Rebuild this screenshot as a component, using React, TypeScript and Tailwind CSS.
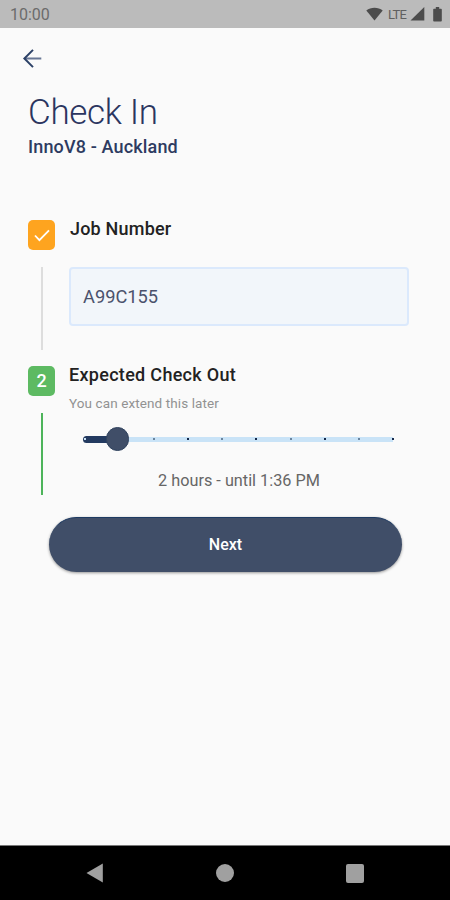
import type { ReactNode } from 'react';

const ticks = [0, 1, 2, 3, 4, 5, 6, 7, 8, 9];

function StatusBar() {
  return (
    <header className="flex h-7 items-center justify-between bg-[#bbbbbb] pl-[10px] pr-[8px] text-[#6b6b6b]">
      <span className="pt-[2px] text-[16px] leading-none">10:00</span>
      <div className="flex items-center">
        <svg width="17" height="14" viewBox="0 0 17 14" fill="#4c4c4c">
          <path d="M.3 3.600C2.600 1.800 5.400.8 8.500.8s5.900 1 8.200 2.800L8.500 13.600z" />
        </svg>
        <span className="ml-[5px] w-[21px] text-[13px] leading-none tracking-[-0.7px] text-[#606060]">LTE</span>
        <svg className="ml-[1px]" width="15" height="14" viewBox="0 0 15 14" fill="#4c4c4c">
          <path d="M14.300 0v13.600H.5z" />
        </svg>
        <svg className="ml-[8px]" width="9" height="15" viewBox="0 0 9 15" fill="#4c4c4c">
          <path d="M2.800 0h3.400v1.700H8q.8 0 .8.8v11.200q0 .8-.8.8H1q-.8 0-.8-.8V2.500q0-.8.8-.8h1.800z" />
        </svg>
      </div>
    </header>
  );
}

function StepBadge({ className, children }: { className: string; children: ReactNode }) {
  return (
    <div className={`flex h-[30px] w-[27px] shrink-0 items-center justify-center rounded-[5px] text-[18px] font-medium leading-none text-white ${className}`}>
      {children}
    </div>
  );
}

function HoursSlider() {
  return (
    <div className="relative ml-[14px] mt-[16px] h-[24px] w-[312px]">
      <div className="absolute left-[2px] right-[2px] top-[10px] h-[5px] bg-[#c9e3f7]" />
      <div className="absolute left-0 top-[9px] h-[7px] w-[36px] rounded-full bg-[#233a60]" />
      {ticks.map((t) => (
        <span
          key={t}
          className={`absolute top-[11px] size-[2px] ${t === 0 ? 'bg-[#c9e3f7]' : t % 2 ? 'bg-[#15294b]' : 'bg-[#69849f]'}`}
          style={{ left: 1.4 + t * 34.2 }}
        />
      ))}
      <div className="absolute left-[23px] top-0 h-[24px] w-[23px] rounded-full border border-[#30435f] bg-[#404e68]" />
    </div>
  );
}

export default function App() {
  return (
    <div className="flex h-[900px] w-[450px] flex-col bg-[#fafafa] font-[Roboto,sans-serif]">
      <StatusBar />
      <main className="flex flex-1 flex-col">
        <button className="ml-[22px] mt-[20px] flex h-[20px] w-[20px] items-center" aria-label="Back">
          <svg width="20" height="20" viewBox="0 0 20 20" fill="none" strokeWidth="2">
            <path d="M19.300 10.500H2.500" stroke="#687795" />
            <path d="M11 1.900 2.400 10.500 11 19.100" stroke="#2c4167" />
          </svg>
        </button>
        <h1 className="ml-[28px] mt-[25px] h-[40px] text-[35px] font-light leading-[40px] tracking-[-0.35px] text-[#2b355f]">Check In</h1>
        <h2 className="ml-[28px] mt-[4px] h-[20px] text-[18px] font-medium leading-[20px] tracking-[0.15px] text-[#2d3b61]">InnoV8 - Auckland</h2>

        <section className="ml-[28px] mt-[62px] flex h-[131px]">
          <div className="flex w-[27px] flex-col items-center">
            <StepBadge className="mt-[1px] bg-[#fea41f]">
              <svg width="16" height="13" viewBox="0 0 16 13" fill="none" stroke="#fff" strokeWidth="1.800">
                <path d="m1 6.500 4.400 4.700L15 1.300" />
              </svg>
            </StepBadge>
            <div className="mt-[17px] h-[83px] w-[2px] bg-[#dddddd]" />
          </div>
          <div className="ml-[14px] w-[340px]">
            <h3 className="h-[20px] pl-px text-[18px] font-medium leading-[20px] tracking-[0.2px] text-[#222222]">Job Number</h3>
            <div className="mt-[28px] flex h-[59px] items-center rounded-[4px] border-2 border-[#dbe9fc] bg-[#f2f6fa] pl-[12px] text-[18.250px] text-[#4b526c]">
              <span>A99C155</span>
            </div>
          </div>
        </section>

        <section className="ml-[28px] mt-[15px] flex h-[152px]">
          <div className="flex w-[27px] flex-col items-center">
            <StepBadge className="mt-[1px] bg-[#5dba62]">2</StepBadge>
            <div className="mt-[17px] h-[82px] w-[2px] bg-[#4db45a]" />
          </div>
          <div className="ml-[14px] w-[340px]">
            <h3 className="h-[20px] text-[18px] font-medium leading-[20px] tracking-[0.3px] text-[#222222]">Expected Check Out</h3>
            <p className="mt-[10px] h-[16px] text-[13.500px] leading-[16px] tracking-[0.1px] text-[#929292]">You can extend this later</p>
            <HoursSlider />
            <p className="mt-[20px] h-[20px] text-center text-[16.250px] leading-[20px] text-[#666666]">2 hours - until 1:36 PM</p>
          </div>
        </section>

        <button className="ml-[49px] flex h-[55px] w-[353px] items-center justify-center rounded-full border-t border-[#1d3a62] bg-[#404e68] text-[16px] font-medium text-white shadow-[0_1px_3px_rgba(0,0,0,0.4)]">
          Next
        </button>
      </main>
      <nav className="flex h-[55px] items-center justify-between border-t border-[#777777] bg-black px-[86px]">
        <svg width="18" height="20" viewBox="0 0 18 20" fill="#a0a0a0">
          <path d="M16.800.6v18.800L.5 10z" />
        </svg>
        <div className="size-[18px] rounded-full bg-[#a0a0a0]" />
        <div className="h-[19px] w-[18px] rounded-[2px] bg-[#a0a0a0]" />
      </nav>
    </div>
  );
}
